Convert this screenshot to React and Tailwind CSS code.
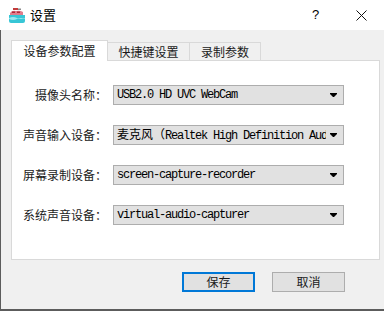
import React from "react";

const cjk = '"Noto Sans CJK SC", "Noto Sans", sans-serif';
const mono = '"Liberation Mono", "Noto Sans CJK SC", monospace';

function AppIcon() {
  return (
    <svg width="18" height="18" viewBox="0 0 18 18">
      <rect x="5" y="2" width="5" height="2" fill="#c23b3b" />
      <rect x="10" y="2.5" width="3" height="1.5" fill="#8a8a8a" />
      <path d="M2 7 Q4 4 8 5 Q12 4 15 6 L15 9 L2 9 Z" fill="#e07d8c" />
      <rect x="4" y="5.5" width="3" height="1.5" fill="#b02a3a" />
      <rect x="9" y="5.5" width="3" height="1.5" fill="#b02a3a" />
      <path d="M1 9 H17 V15 Q17 17 15 17 H3 Q1 17 1 15 Z" fill="#37c6d6" />
      <path d="M1 12 Q5 10 9 12 T17 12 V13 Q13 11 9 13 T1 13 Z" fill="#9be6ee" />
    </svg>
  );
}

function Arrow() {
  return (
    <svg width="7" height="4" viewBox="0 0 7 4">
      <path d="M0 0 H7 V1 L4 4 H3 L0 1 Z" fill="#000" />
    </svg>
  );
}

function Combo({ children }) {
  return (
    <div className="w-[231px] h-[20px] bg-[#e1e1e1] border border-[#adadad] flex items-center pl-[3px] pr-[6px]">
      <div
        className="flex-1 overflow-hidden whitespace-nowrap text-[12px] leading-[18px] text-black tracking-[-1.2px]"
        style={{ fontFamily: mono }}
      >
        {children}
      </div>
      <div className="ml-[4px] flex items-center">
        <Arrow />
      </div>
    </div>
  );
}

function Row({ label, children }) {
  return (
    <div className="flex items-center h-[20px]">
      <div className="w-[95px] text-right text-[12px] text-[#1a1a1a] whitespace-nowrap" style={{ fontFamily: cjk }}>
        {label}
      </div>
      <div className="ml-[6px]">{children}</div>
    </div>
  );
}

export default function App() {
  return (
    <div className="w-[384px] h-[311px] bg-[#f0f0f0] flex flex-col overflow-hidden" style={{ fontFamily: cjk }}>
      {/* Title bar */}
      <div className="h-[30px] bg-white flex items-center shrink-0">
        <div className="ml-[8px]">
          <AppIcon />
        </div>
        <div className="ml-[4px] text-[13px] text-black">设置</div>
        <div className="ml-auto w-[12px] text-[13px] text-black" style={{ fontFamily: '"Liberation Sans", sans-serif' }}>
          ?
        </div>
        <div className="ml-[32px] mr-[17px]">
          <svg width="11" height="11" viewBox="0 0 11 11">
            <path d="M0.5 0.5 L10.5 10.5 M10.5 0.5 L0.5 10.5" stroke="#111" strokeWidth="1" />
          </svg>
        </div>
      </div>

      {/* Body */}
      <div className="flex-1 border-l border-b-2 border-[#5c5c5c] pl-[10px] pt-[10px] flex flex-col">
        {/* Tabs */}
        <div className="flex items-end h-[20px] relative z-10">
          <div className="w-[97px] h-[20px] bg-white border border-b-0 border-[#d9d9d9] flex items-center justify-center text-[12px] text-[#1a1a1a] -mb-px h-[21px]">
            设备参数配置
          </div>
          <div className="w-[82px] h-[18px] bg-[#f0f0f0] border border-l-0 border-b-0 border-[#d9d9d9] flex items-center justify-center text-[12px] text-[#1a1a1a]">
            快捷键设置
          </div>
          <div className="w-[71px] h-[18px] bg-[#f0f0f0] border border-l-0 border-b-0 border-[#d9d9d9] flex items-center justify-center text-[12px] text-[#1a1a1a]">
            录制参数
          </div>
        </div>

        {/* Pane */}
        <div className="w-[369px] h-[200px] bg-white border border-[#d9d9d9] pt-[24px] flex flex-col gap-[20px]">
          <Row label="摄像头名称：">
            <Combo>USB2.0 HD UVC WebCam</Combo>
          </Row>
          <Row label="声音输入设备：">
            <Combo>
              <span className="tracking-normal" style={{ fontFamily: cjk }}>麦克风（</span>
              Realtek High Definition Audio
            </Combo>
          </Row>
          <Row label="屏幕录制设备：">
            <Combo>screen-capture-recorder</Combo>
          </Row>
          <Row label="系统声音设备：">
            <Combo>virtual-audio-capturer</Combo>
          </Row>
        </div>

        {/* Buttons */}
        <div className="flex mt-[12px] pl-[171px] gap-[17px]">
          <button className="w-[73px] h-[20px] bg-[#e1e1e1] border-2 border-[#0078d7] text-[12px] text-[#1a1a1a] flex items-center justify-center">
            保存
          </button>
          <button className="w-[73px] h-[20px] bg-[#e1e1e1] border border-[#adadad] text-[12px] text-[#1a1a1a] flex items-center justify-center">
            取消
          </button>
        </div>
      </div>
    </div>
  );
}
